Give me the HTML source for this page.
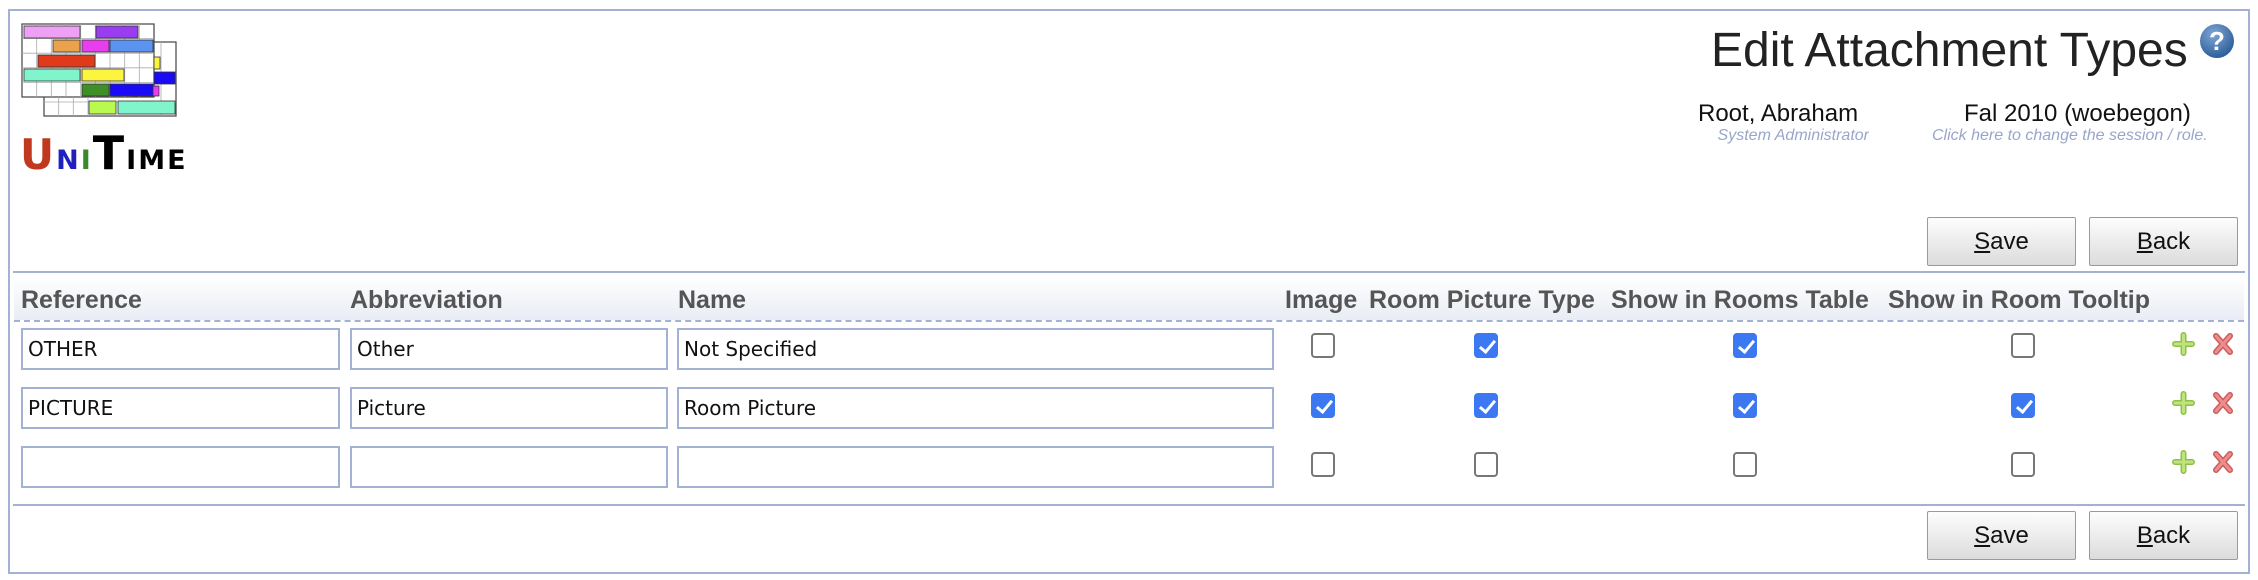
<!DOCTYPE html>
<html><head><meta charset="utf-8"><style>
*{margin:0;padding:0;box-sizing:border-box}
body{width:2258px;height:580px;background:#fff;position:relative;overflow:hidden;font-family:"Liberation Sans",Arial,sans-serif}
.a{position:absolute}
.line{position:absolute;left:13px;width:2232px;height:2px;background:#a3b2d4}
.btn{position:absolute;width:149px;height:49px;border:1px solid #9a9a9a;background:linear-gradient(#fdfdfd,#dcdcdc);font-size:24px;text-align:center;line-height:47px;color:#111;border-radius:2px}
.hd{position:absolute;top:286px;font-size:25px;font-weight:bold;color:#555;white-space:nowrap}
.in{position:absolute;height:42px;border:2px solid #a3b2d4;font-family:"DejaVu Sans",sans-serif;font-size:20px;line-height:38px;padding-left:5px;color:#111}
.cb{position:absolute;width:24px;height:25px;border:2px solid #777;border-radius:4px;background:#fff}
.cb.on{background:#3b78f2;border-color:#3b78f2}
.cb.on::after{content:"";position:absolute;left:7px;top:2px;width:6px;height:13px;border:solid #fff;border-width:0 3px 3px 0;transform:rotate(40deg)}
</style></head><body>
<div class="a" style="left:8px;top:9px;width:2242px;height:565px;border:2px solid #a3b2d4"></div>

<svg class="a" style="left:20px;top:22px" width="160" height="96" viewBox="20 22 160 96">
<g stroke="#444" stroke-width="1.2">
<rect x="44" y="42" width="132" height="74" fill="#fff"/>
<rect x="22" y="24" width="132" height="73" fill="#fff"/>
</g>
<g stroke="#aaa" stroke-width="0.8">
<path d="M36.7 24V97M51.3 24V97M66 24V97M80.7 24V97M95.3 24V97M110 24V97M124.7 24V97M139.3 24V97M22 38.6H154M22 53.2H154M22 67.8H154M22 82.4H154M161 42V116M44 102H176M58.7 97V116M73.3 97V116M88 97V116"/>
</g>
<g stroke="#333" stroke-width="0.8">
<rect x="24" y="26" width="56" height="12" fill="#eea0f5"/>
<rect x="96" y="26" width="42" height="12" fill="#9a3df0"/>
<rect x="53" y="40" width="27" height="12" fill="#eba24d"/>
<rect x="82" y="40" width="27" height="12" fill="#e83ef0"/>
<rect x="110" y="40" width="43" height="12" fill="#5b93f0"/>
<rect x="38" y="55" width="57" height="12" fill="#e03a1a"/>
<rect x="154" y="57" width="6" height="12" fill="#fbf540"/>
<rect x="24" y="69" width="56" height="12" fill="#80f5cc"/>
<rect x="82" y="69" width="42" height="12" fill="#fbf540"/>
<rect x="154" y="72" width="21" height="12" fill="#1a0af5"/>
<rect x="132" y="86" width="27" height="10" fill="#e83ef0"/>
<rect x="82" y="84" width="27" height="12" fill="#3f8f28"/>
<rect x="110" y="84" width="43" height="12" fill="#1a0af5"/>
<rect x="89" y="101" width="27" height="13" fill="#b8fa50"/>
<rect x="118" y="101" width="57" height="13" fill="#80f5cc"/>
</g>
</svg>
<div class="a" style="left:20px;top:128px;font-family:'DejaVu Sans',sans-serif;font-weight:bold;white-space:nowrap;line-height:50px;letter-spacing:2px">
<span style="color:#c0391f;font-size:42px">U</span><span style="color:#2020c0;font-size:27px">N</span><span style="color:#3a8a2a;font-size:27px">I</span><span style="color:#000;font-size:46px">T</span><span style="color:#000;font-size:27px">IME</span>
</div>

<div class="a" style="left:1711px;top:23px;font-size:48px;color:#222;white-space:nowrap">Edit Attachment Types</div>
<svg class="a" style="left:2199px;top:23px" width="36" height="36" viewBox="0 0 36 36">
<defs><radialGradient id="g" cx="40%" cy="30%" r="70%"><stop offset="0" stop-color="#7fa6d6"/><stop offset="1" stop-color="#2e5f99"/></radialGradient></defs>
<circle cx="18" cy="18" r="17" fill="url(#g)"/>
<text x="18" y="27" font-family="Liberation Sans" font-weight="bold" font-size="26" fill="#fff" text-anchor="middle">?</text>
</svg>

<div class="a" style="left:1698px;top:100px;font-size:24px;color:#111;white-space:nowrap">Root, Abraham</div>
<div class="a" style="left:1680px;top:127px;width:189px;overflow:hidden;text-align:right;font-size:16px;font-style:italic;color:#98a6cc;white-space:nowrap;direction:rtl"><span style="direction:ltr;unicode-bidi:embed">System Administrator</span></div>
<div class="a" style="left:1964px;top:100px;font-size:24px;color:#111;white-space:nowrap">Fal 2010 (woebegon)</div>
<div class="a" style="left:1932px;top:127px;font-size:16px;font-style:italic;color:#98a6cc;white-space:nowrap">Click here to change the session / role.</div>

<div class="btn" style="left:1927px;top:217px"><u>S</u>ave</div>
<div class="btn" style="left:2089px;top:217px"><u>B</u>ack</div>
<div class="line" style="top:271px"></div>

<div class="a" style="left:14px;top:277px;width:2230px;height:45px;background:linear-gradient(#fff,#e9ecf5);border-bottom:2px dashed #a3b2d4"></div>
<div class="hd" style="left:21px">Reference</div>
<div class="hd" style="left:350px">Abbreviation</div>
<div class="hd" style="left:678px">Name</div>
<div class="hd" style="left:1285px">Image</div>
<div class="hd" style="left:1369px">Room Picture Type</div>
<div class="hd" style="left:1611px">Show in Rooms Table</div>
<div class="hd" style="left:1888px">Show in Room Tooltip</div>

<div class="in" style="left:21px;top:328px;width:319px">OTHER</div>
<div class="in" style="left:350px;top:328px;width:318px">Other</div>
<div class="in" style="left:677px;top:328px;width:597px">Not Specified</div>
<div class="cb" style="left:1311px;top:333px"></div>
<div class="cb on" style="left:1474px;top:333px"></div>
<div class="cb on" style="left:1733px;top:333px"></div>
<div class="cb" style="left:2011px;top:333px"></div>

<div class="in" style="left:21px;top:387px;width:319px">PICTURE</div>
<div class="in" style="left:350px;top:387px;width:318px">Picture</div>
<div class="in" style="left:677px;top:387px;width:597px">Room Picture</div>
<div class="cb on" style="left:1311px;top:393px"></div>
<div class="cb on" style="left:1474px;top:393px"></div>
<div class="cb on" style="left:1733px;top:393px"></div>
<div class="cb on" style="left:2011px;top:393px"></div>

<div class="in" style="left:21px;top:446px;width:319px"></div>
<div class="in" style="left:350px;top:446px;width:318px"></div>
<div class="in" style="left:677px;top:446px;width:597px"></div>
<div class="cb" style="left:1311px;top:452px"></div>
<div class="cb" style="left:1474px;top:452px"></div>
<div class="cb" style="left:1733px;top:452px"></div>
<div class="cb" style="left:2011px;top:452px"></div>

<svg class="a" style="left:0;top:0" width="2258" height="580">
<g stroke-linecap="round">
<g id="r"><path d="M2183.5 335V353M2175 344H2192" stroke="#8fc04a" stroke-width="6"/><path d="M2183.5 335V353M2175 344H2192" stroke="#bfe47e" stroke-width="3"/>
<path d="M2216 336L2230 352M2230 336L2216 352" stroke="#cc5c5c" stroke-width="6"/><path d="M2216 336L2230 352M2230 336L2216 352" stroke="#ec8e8e" stroke-width="3"/></g>
<use href="#r" y="59"/><use href="#r" y="118"/>
</g>
</svg>

<div class="line" style="top:504px"></div>
<div class="btn" style="left:1927px;top:511px"><u>S</u>ave</div>
<div class="btn" style="left:2089px;top:511px"><u>B</u>ack</div>
</body></html>
